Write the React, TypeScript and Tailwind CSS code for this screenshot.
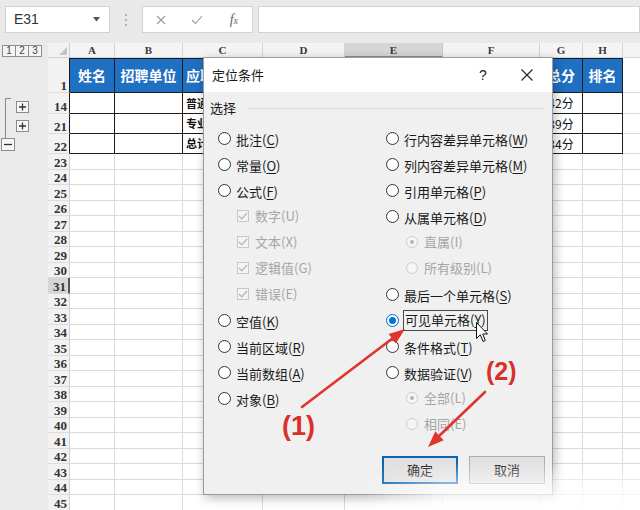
import type { ReactNode } from "react";

const cjk = "font-['Noto_Sans_CJK_SC',sans-serif]";
const serif = "font-['Liberation_Serif',serif]";

const columns = [
  { name: "A", w: "w-[45px]" },
  { name: "B", w: "w-[68px]" },
  { name: "C", w: "w-[80px]" },
  { name: "D", w: "w-[82px]" },
  { name: "E", w: "w-[98px]" },
  { name: "F", w: "w-[97px]" },
  { name: "G", w: "w-[43px]" },
  { name: "H", w: "w-[40px]" },
  { name: "I", w: "w-[60px]" },
];

interface SheetRowData {
  n: string;
  h: string;
  kind: "head" | "table" | "plain";
  cells?: Record<string, string>;
}

// D–F sit under the dialog, so their header texts are left out
const headRow: SheetRowData = {
  n: "1",
  h: "h-[35px]",
  kind: "head",
  cells: { A: "姓名", B: "招聘单位", C: "应聘岗位", G: "总分", H: "排名" },
};

const tableRows: SheetRowData[] = [
  { n: "14", h: "h-[21px]", kind: "table", cells: { C: "普通岗位", G: "42分" } },
  { n: "21", h: "h-[20px]", kind: "table", cells: { C: "专业岗位", G: "39分" } },
  { n: "22", h: "h-[20px]", kind: "table", cells: { C: "总计", G: "34分" } },
];

const plainRows: SheetRowData[] = Array.from({ length: 23 }, (_, i) => ({
  n: String(23 + i),
  h: "h-[15.5px]",
  kind: "plain" as const,
}));

const sheetRows = [headRow, ...tableRows, ...plainRows];

interface Opt {
  label: string;
  hotkey: string;
  kind: "radio" | "check" | "sub";
  checked?: boolean;
}

const leftOpts: Opt[] = [
  { label: "批注", hotkey: "C", kind: "radio" },
  { label: "常量", hotkey: "O", kind: "radio" },
  { label: "公式", hotkey: "F", kind: "radio" },
  { label: "数字", hotkey: "U", kind: "check" },
  { label: "文本", hotkey: "X", kind: "check" },
  { label: "逻辑值", hotkey: "G", kind: "check" },
  { label: "错误", hotkey: "E", kind: "check" },
  { label: "空值", hotkey: "K", kind: "radio" },
  { label: "当前区域", hotkey: "R", kind: "radio" },
  { label: "当前数组", hotkey: "A", kind: "radio" },
  { label: "对象", hotkey: "B", kind: "radio" },
];

const rightOpts: Opt[] = [
  { label: "行内容差异单元格", hotkey: "W", kind: "radio" },
  { label: "列内容差异单元格", hotkey: "M", kind: "radio" },
  { label: "引用单元格", hotkey: "P", kind: "radio" },
  { label: "从属单元格", hotkey: "D", kind: "radio" },
  { label: "直属", hotkey: "I", kind: "sub", checked: true },
  { label: "所有级别", hotkey: "L", kind: "sub" },
  { label: "最后一个单元格", hotkey: "S", kind: "radio" },
  { label: "可见单元格", hotkey: "Y", kind: "radio", checked: true },
  { label: "条件格式", hotkey: "T", kind: "radio" },
  { label: "数据验证", hotkey: "V", kind: "radio" },
  { label: "全部", hotkey: "L", kind: "sub", checked: true },
  { label: "相同", hotkey: "E", kind: "sub" },
];

function TopBar() {
  return (
    <div className="flex h-[43px] items-start bg-[#e9e9e9] pl-[5px] pt-[6px]">
      <div className="flex h-[27px] w-[105px] items-center border border-[#d2d2d2] bg-white pl-[8px] pr-[9px]">
        <span className="font-['Liberation_Sans',sans-serif] text-[14px] text-[#333]">E31</span>
        <svg className="ml-auto" width="7" height="5" viewBox="0 0 7 5">
          <path d="M0 0 H7 L3.5 4.5 Z" fill="#555" />
        </svg>
      </div>
      <div className="flex h-[27px] w-[32px] flex-col items-center justify-center gap-[3px]">
        <span className="h-[2px] w-[2px] bg-[#b0b0b0]" />
        <span className="h-[2px] w-[2px] bg-[#b0b0b0]" />
        <span className="h-[2px] w-[2px] bg-[#b0b0b0]" />
      </div>
      <div className="flex h-[27px] w-[111px] items-center border border-[#d2d2d2] bg-white">
        <div className="flex w-[37px] justify-center">
          <svg width="10" height="10" viewBox="0 0 10 10">
            <path d="M1 1 L9 9 M9 1 L1 9" stroke="#9a9a9a" strokeWidth="1.1" />
          </svg>
        </div>
        <div className="flex w-[37px] justify-center">
          <svg width="12" height="10" viewBox="0 0 12 10">
            <path d="M1 5 L4.5 8.5 L11 1" stroke="#9a9a9a" strokeWidth="1.1" fill="none" />
          </svg>
        </div>
        <div className="flex w-[37px] justify-center">
          <span className={`${serif} text-[14px] italic text-[#666]`}>
            f<span className="text-[10px]">x</span>
          </span>
        </div>
      </div>
      <div className="ml-[5px] h-[27px] flex-1 border border-[#d2d2d2] bg-white" />
    </div>
  );
}

function Gutter() {
  return (
    <div className="flex w-[48px] shrink-0 flex-col bg-[#eaeaea]">
      <div className="flex h-[15px] items-center pl-[2px]">
        {["1", "2", "3"].map((n) => (
          <span
            key={n}
            className="-ml-px flex h-[12px] w-[14px] items-center justify-center border border-[#8e8e8e] bg-[#f4f4f4] font-['Liberation_Sans',sans-serif] text-[10px] leading-none text-[#444] first:ml-0"
          >
            {n}
          </span>
        ))}
      </div>
      <div className="h-[35px]" />
      <svg width="48" height="62" viewBox="0 0 48 62">
        <path d="M11 5.5 H5.5 V45" stroke="#8a8a8a" fill="none" />
        <rect x="16.5" y="8.5" width="12" height="11" fill="#f7f7f7" stroke="#8a8a8a" />
        <path d="M19 14 H26 M22.5 10.5 V17.5" stroke="#333" strokeWidth="1.3" />
        <rect x="16.5" y="27.5" width="12" height="11" fill="#f7f7f7" stroke="#8a8a8a" />
        <path d="M19 33 H26 M22.5 29.5 V36.5" stroke="#333" strokeWidth="1.3" />
        <rect x="1.5" y="45.5" width="13" height="12" fill="#f7f7f7" stroke="#8a8a8a" />
        <path d="M4 51.5 H12" stroke="#333" strokeWidth="1.3" />
      </svg>
    </div>
  );
}

function HeaderRow() {
  return (
    <div className="flex h-[15px]">
      <div className="flex w-[22px] shrink-0 items-end justify-end border-r border-b border-[#cfcfcf] bg-[#f2f2f2] pb-[2px] pr-[2px]">
        <svg width="8" height="8" viewBox="0 0 8 8">
          <path d="M8 0 V8 H0 Z" fill="#c4c4c4" />
        </svg>
      </div>
      {columns.map((c) => (
        <div
          key={c.name}
          className={`${c.w} flex shrink-0 items-center justify-center pt-[1px] ${serif} text-[11px] font-bold text-[#3a3a3a] ${
            c.name === "E"
              ? "border-r border-b-2 border-r-[#c8c8c8] border-b-[#8c8c8c] bg-[#d6d6d6]"
              : "border-r border-b border-[#d4d4d4] bg-[#f4f4f4]"
          }`}
        >
          {c.name === "I" ? "" : c.name}
        </div>
      ))}
    </div>
  );
}

function Cell({ row, col }: { row: SheetRowData; col: string }) {
  const text = row.cells?.[col];
  if (row.kind === "head" && col !== "I") {
    return (
      <div
        className={`flex h-full items-center overflow-hidden whitespace-nowrap border-t border-r border-b border-[#1b1b1b] bg-[#1f6fc2] ${cjk} text-[14px] font-bold text-white ${
          col === "C" ? "justify-start pl-[3px]" : "justify-center"
        }`}
      >
        {text}
      </div>
    );
  }
  if (row.kind === "table" && col !== "I") {
    return (
      <div
        className={`flex h-full items-center overflow-hidden whitespace-nowrap border-r border-b border-[#1b1b1b] bg-white ${cjk} text-[#111] ${
          col === "C" ? "justify-start pl-[3px] text-[11px] font-bold" : "justify-center text-[12px]"
        }`}
      >
        {text}
      </div>
    );
  }
  return <div className="h-full border-r border-b border-[#dadada] bg-white" />;
}

function SheetRow({ row }: { row: SheetRowData }) {
  const selected = row.n === "31";
  const inTable = row.kind !== "plain";
  return (
    <div className={`flex ${row.h}`}>
      <div
        className={`flex w-[22px] shrink-0 items-end justify-end border-b border-[#dcdcdc] pr-[2px] ${serif} text-[13px] font-bold leading-[13px] text-[#333] ${
          selected
            ? "border-r-2 border-r-[#555] bg-[#d6d6d6]"
            : inTable
            ? "border-r border-r-[#1b1b1b] bg-[#f2f2f2]"
            : "border-r border-r-[#cfcfcf] bg-[#f2f2f2]"
        }`}
      >
        {row.n}
      </div>
      {columns.map((c) => (
        <div key={c.name} className={`${c.w} shrink-0`}>
          <Cell row={row} col={c.name} />
        </div>
      ))}
    </div>
  );
}

function Label({ opt, disabled }: { opt: Opt; disabled: boolean }) {
  return (
    <span className={`whitespace-nowrap text-[13px] leading-[16px] ${disabled ? "text-[#a6a6a6]" : "text-[#1a1a1a]"}`}>
      {opt.label}(
      {disabled ? opt.hotkey : <span className="underline underline-offset-2">{opt.hotkey}</span>})
    </span>
  );
}

function OptionRow({ opt }: { opt: Opt }) {
  if (opt.kind === "check") {
    return (
      <div className="flex h-[26px] items-center pl-[19px]">
        <span className="mr-[6px] flex h-[12px] w-[12px] items-center justify-center border border-[#c8c8c8] bg-[#f4f4f4]">
          <svg width="10" height="8" viewBox="0 0 10 8">
            <path d="M1 4 L3.8 6.8 L9 1" stroke="#b3b3b3" strokeWidth="1.2" fill="none" />
          </svg>
        </span>
        <Label opt={opt} disabled />
      </div>
    );
  }
  if (opt.kind === "sub") {
    return (
      <div className="flex h-[26px] items-center pl-[20px]">
        <span className="mr-[6px] flex h-[12px] w-[12px] items-center justify-center rounded-full border border-[#cdcdcd] bg-[#f6f6f6]">
          {opt.checked && <span className="h-[4px] w-[4px] rounded-full bg-[#b4b4b4]" />}
        </span>
        <Label opt={opt} disabled />
      </div>
    );
  }
  return (
    <div className="flex h-[26px] items-center">
      <span
        className={`flex h-[13px] w-[13px] shrink-0 items-center justify-center rounded-full border bg-white ${
          opt.checked ? "border-[#0067c0]" : "border-[#333]"
        }`}
      >
        {opt.checked && <span className="h-[7px] w-[7px] rounded-full bg-[#0078d7]" />}
      </span>
      {opt.checked ? (
        <span className="ml-[4px] flex h-[21px] items-center border border-[#4a4a4a] px-[1px]">
          <Label opt={opt} disabled={false} />
        </span>
      ) : (
        <span className="ml-[5px]">
          <Label opt={opt} disabled={false} />
        </span>
      )}
    </div>
  );
}

function DialogButton({ children, primary }: { children: ReactNode; primary?: boolean }) {
  return (
    <div
      className={`flex h-[28px] w-[76px] items-center justify-center bg-[#e1e1e1] text-[13px] text-[#222] ${
        primary ? "border-2 border-[#0a64b4]" : "border border-[#adadad]"
      }`}
    >
      {children}
    </div>
  );
}

function GoToSpecialDialog() {
  return (
    <div
      className={`absolute left-[203px] top-[57px] flex h-[438px] w-[350px] flex-col border border-[#9c9c9c] bg-[#f0f0f0] shadow-[2px_3px_10px_rgba(0,0,0,0.28)] ${cjk}`}
    >
      <div className="flex h-[34px] shrink-0 items-center bg-white pl-[8px]">
        <span className="text-[13px] text-[#1a1a1a]">定位条件</span>
        <span className="ml-auto w-[20px] text-center font-['Liberation_Sans',sans-serif] text-[14px] text-[#222]">?</span>
        <svg className="ml-[28px] mr-[19px]" width="12" height="12" viewBox="0 0 12 12">
          <path d="M0.5 0.5 L11.5 11.5 M11.5 0.5 L0.5 11.5" stroke="#222" strokeWidth="1.1" />
        </svg>
      </div>
      <div className="mt-[8px] flex h-[16px] items-center pl-[6px] pr-[7px]">
        <span className="text-[13px] leading-[16px] text-[#1a1a1a]">选择</span>
        <div className="ml-[12px] h-px flex-1 bg-[#d9d9d9]" />
      </div>
      <div className="mt-[9px] flex pl-[14px]">
        <div className="flex w-[168px] flex-col">
          {leftOpts.map((o) => (
            <OptionRow key={o.label} opt={o} />
          ))}
        </div>
        <div className="flex flex-col">
          {rightOpts.map((o) => (
            <OptionRow key={o.label} opt={o} />
          ))}
        </div>
      </div>
      <div className="mt-[19px] flex justify-end gap-[11px] pr-[7px]">
        <DialogButton primary>确定</DialogButton>
        <DialogButton>取消</DialogButton>
      </div>
    </div>
  );
}

function Annotations() {
  return (
    <>
      <svg className="pointer-events-none absolute left-0 top-0" width="640" height="510" viewBox="0 0 640 510">
        <path d="M302 407 L393 338" stroke="#e0342c" strokeWidth="2.6" strokeLinecap="round" />
        <path d="M405 329 L395.8 343.5 L388.6 333.9 Z" fill="#e0342c" />
        <path d="M485 392 L439 436" stroke="#e0342c" strokeWidth="2.6" strokeLinecap="round" />
        <path d="M428 447 L443.7 440.2 L435.3 431.6 Z" fill="#e0342c" />
      </svg>
      <span className="pointer-events-none absolute left-[282px] top-[413px] font-['Liberation_Sans',sans-serif] text-[27px] font-bold leading-none text-[#d9302a]">
        (1)
      </span>
      <span className="pointer-events-none absolute left-[486px] top-[359px] font-['Liberation_Sans',sans-serif] text-[25px] font-bold leading-none text-[#d9302a]">
        (2)
      </span>
      <svg className="pointer-events-none absolute left-[476px] top-[322px]" width="13" height="21" viewBox="0 0 13 21">
        <path d="M0.5 0.5 V16.5 L4.3 12.8 L7 19.5 L9.3 18.5 L6.7 12 H11.5 Z" fill="#fff" stroke="#111" strokeWidth="1" />
      </svg>
      <div className="pointer-events-none absolute left-[360px] top-[462px] h-[48px] w-[280px] bg-linear-to-b from-white/0 via-white/60 to-white/95 [mask-image:linear-gradient(to_right,transparent,black_30%)]" />
    </>
  );
}

export default function App() {
  return (
    <div className="relative h-[510px] w-[640px] overflow-hidden bg-[#e9e9e9]">
      <TopBar />
      <div className="flex">
        <Gutter />
        <div className="flex flex-col">
          <HeaderRow />
          {sheetRows.map((r) => (
            <SheetRow key={r.n} row={r} />
          ))}
        </div>
      </div>
      <GoToSpecialDialog />
      <Annotations />
    </div>
  );
}
